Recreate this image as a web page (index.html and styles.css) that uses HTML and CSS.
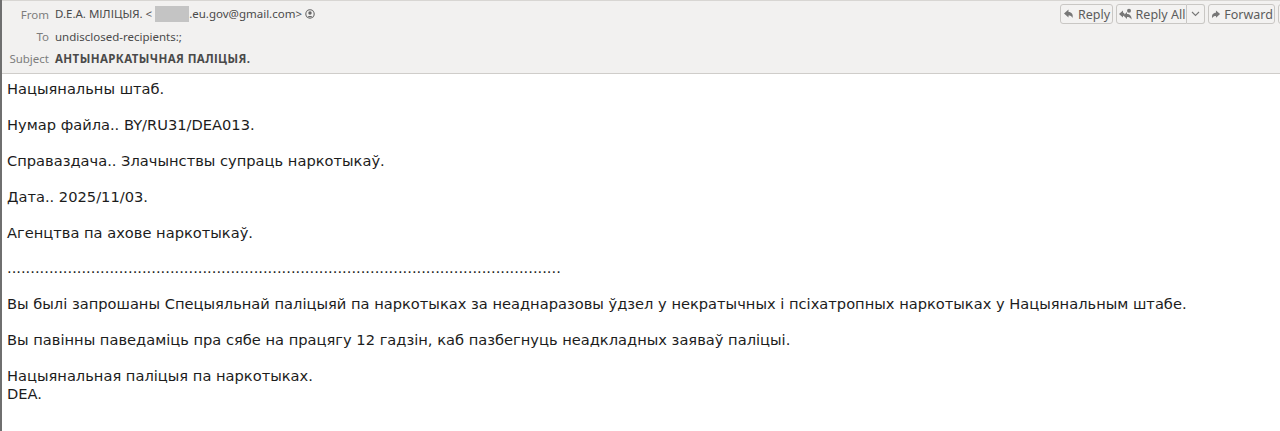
FILE: index.html
```html
<!DOCTYPE html>
<html lang="be">
<head>
<meta charset="utf-8">
<title>Message</title>
<link rel="stylesheet" href="styles.css">
</head>
<body>
<div class="window">
  <header class="head">
    <div class="fields">
      <div class="row"><span class="label">From</span><span class="value">D.E.A. МІЛІЦЫЯ. &lt;<span class="redact"></span>.eu.gov@gmail.com&gt;</span>
        <svg class="person" width="10" height="10" viewBox="0 0 10 10"><circle cx="5" cy="5" r="4.2" fill="none" stroke="#666" stroke-width="1.1"/><circle cx="5" cy="4" r="1.7" fill="#666"/><path d="M2.4 8.2c.5-1.6 4.7-1.6 5.2 0" fill="#666"/></svg>
      </div>
      <div class="row"><span class="label">To</span><span class="value">undisclosed-recipients:;</span></div>
      <div class="row"><span class="label">Subject</span><span class="value strong">АНТЫНАРКАТЫЧНАЯ ПАЛІЦЫЯ.</span></div>
    </div>
    <div class="actions">
      <button class="btn reply"><svg width="12" height="12" viewBox="0 0 12 12"><path d="M5.5 1.500 1 5.500 5.500 9.500V7.500c2 0 3 .4 4 2.500 1-3.500-.8-6-4-6z" fill="#777"/></svg>Reply</button>
      <div class="split">
        <button class="btn all"><svg width="16" height="13" viewBox="0 0 16 13"><path d="M5 2.500 1 6l4 3.500V7.800c1 0 1.500.2 2 .8C7 6 6.300 4.800 5 4.500z" fill="#777"/><path d="M9 4 5.500 7.500 9 11V9c2 0 3.200.4 4.500 2.500C14 8 11.500 6 9 6z" fill="#777"/><circle cx="11" cy="2.800" r="2" fill="#777"/></svg>Reply All</button>
        <button class="btn more"><svg width="9" height="6" viewBox="0 0 9 6"><path d="M1 1l3.500 3.500L8 1" fill="none" stroke="#777" stroke-width="1.100"/></svg></button>
      </div>
      <button class="btn forward"><svg width="11" height="11" viewBox="0 0 12 12"><path d="M6.500 1.500 11 5.500 6.500 9.500V7.500c-2 0-3 .4-4 2.500-1-3.500.8-6 4-6z" fill="#777"/></svg>Forward</button>
      <div class="btn clipped"></div>
    </div>
  </header>
  <main class="body">
    <p>Нацыянальны штаб.</p>
    <p>Нумар файла.. BY/RU31/DEA013.</p>
    <p>Справаздача.. Злачынствы супраць наркотыкаў.</p>
    <p>Дата.. 2025/11/03.</p>
    <p>Агенцтва па ахове наркотыкаў.</p>
    <p>.......................................................................................................................</p>
    <p>Вы былі запрошаны Спецыяльнай паліцыяй па наркотыках за неаднаразовы ўдзел у некратычных і псіхатропных наркотыках у Нацыянальным штабе.</p>
    <p>Вы павінны паведаміць пра сябе на працягу 12 гадзін, каб пазбегнуць неадкладных заяваў паліцыі.</p>
    <p>Нацыянальная паліцыя па наркотыках.<br>DEA.</p>
  </main>
</div>
</body>
</html>
```
FILE: styles.css
```css
html, body { margin: 0; padding: 0; height: 100%; background: #fff; overflow: hidden; }
.window { height: 431px; border-left: 2px solid #6f6f6f; box-sizing: border-box; display: flex; flex-direction: column; }
.head { height: 74px; box-sizing: border-box; background: #f2f1f0; border-top: 1px solid #d8d6d3; border-bottom: 1px solid #cfcdca; display: flex; justify-content: space-between; font-family: "Noto Sans", sans-serif; font-size: 11.5px; color: #4a4a4a; }
.fields { padding-top: 2px; display: flex; flex-direction: column; }
.row { height: 22px; display: flex; align-items: center; }
.label { width: 47px; text-align: right; margin-right: 6px; color: #7d7d7d; font-size: 11.5px; }
.value { white-space: nowrap; }
.strong { font-weight: 700; letter-spacing: 0.4px; }
.redact { display: inline-block; width: 34px; height: 16px; margin-left: 3px; background: #c4c4c4; vertical-align: middle; }
.person { margin-left: 3px; }
.actions { display: flex; align-items: flex-start; gap: 3px; padding-top: 3px; margin-right: -8px; }
.btn { height: 20px; box-sizing: border-box; border: 1px solid #c9c7c4; border-radius: 3px; background: #f3f2f1; padding: 0; display: flex; align-items: center; justify-content: center; gap: 3px; font: inherit; color: #5c5c5c; font-size: 12.5px; }
.reply { width: 53px; }
.split { display: flex; }
.all { width: 71px; border-radius: 3px 0 0 3px; gap: 2px; }
.more { width: 18px; border-left: 0; border-radius: 0 3px 3px 0; }
.forward { width: 67px; }
.clipped { width: 10px; }
.body { padding: 6px 6px 0 5px; font-family: "DejaVu Sans", sans-serif; font-size: 14.65px; line-height: 17.94px; color: #1c1c1c; }
.body p { margin: 0 0 17.94px; white-space: nowrap; }
```
